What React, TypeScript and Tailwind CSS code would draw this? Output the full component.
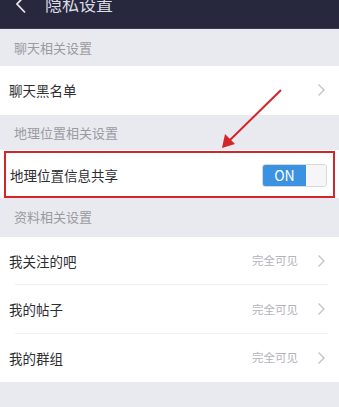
import React from "react";

const font = { fontFamily: '"Noto Sans CJK SC", "Noto Sans", sans-serif' };

function Chevron() {
  return (
    <svg width="9" height="14" viewBox="0 0 9 14" className="shrink-0">
      <path d="M1.5 1.5 L7 7 L1.5 12.5" fill="none" stroke="#c4c4c8" strokeWidth="1.4" />
    </svg>
  );
}

function Section({ title, h, pt }: { title: string; h: string; pt?: string }) {
  return (
    <div className={`${h} flex items-center pl-[14px] text-[13px] text-[#9a9aa0] bg-[#e9eaf0]`}>
      <span className={pt}>{title}</span>
    </div>
  );
}

function Row({ label, value, border }: { label: string; value?: string; border?: boolean }) {
  return (
    <div className="h-[48.5px] bg-white flex items-center pl-[9px] relative">
      <span className="text-[13.5px] text-[#2e2e32] flex-1">{label}</span>
      {value && <span className="text-[11.5px] text-[#b4b4b8] mr-[19px]">{value}</span>}
      <span className="mr-[13px] flex items-center"><Chevron /></span>
      {border && <div className="absolute left-[15px] right-[11px] bottom-0 h-px bg-[#efeff2]" />}
    </div>
  );
}

export default function App() {
  return (
    <div className="w-[339px] h-[407px] bg-[#e9eaf0] relative overflow-hidden" style={font}>
      {/* header */}
      <div className="h-[29px] bg-[#27273e] flex items-end relative border-b border-[#3a3a50]">
        <svg width="12" height="20" viewBox="0 0 12 20" className="absolute left-[15px] top-[-6px]">
          <path d="M10 1.5 L2 10 L10 18.5" fill="none" stroke="#e6e6ec" strokeWidth="1.8" />
        </svg>
        <span className="absolute left-[45px] top-[-8px] text-[17px] text-[#dcdce4] leading-[24px]">隐私设置</span>
      </div>

      <Section title="聊天相关设置" h="h-[37px]" />
      <Row label="聊天黑名单" />
      <Section title="地理位置相关设置" h="h-[35px]" pt="mt-[2px]" />

      {/* location row */}
      <div className="h-[48px] bg-white flex items-center pl-[10px] relative">
        <span className="text-[13.5px] text-[#2e2e32] flex-1 mt-[3px]">地理位置信息共享</span>
        <div className="mr-[12px] mt-[3px] flex h-[23px] w-[65px] rounded-[3px] overflow-hidden border border-[#d8d8dc]">
          <div className="w-[43px] bg-[#3a92e0] flex items-center justify-center text-white text-[14px]">ON</div>
          <div className="flex-1 bg-[#f6f6f8]" />
        </div>
        <div className="absolute left-[4px] right-[4px] top-[1px] bottom-[0px] border-[2.5px] border-[#d3262b] pointer-events-none" />
      </div>

      <Section title="资料相关设置" h="h-[39px]" />
      <Row label="我关注的吧" value="完全可见" border />
      <Row label="我的帖子" value="完全可见" border />
      <Row label="我的群组" value="完全可见" />

      {/* annotation arrow */}
      <svg className="absolute left-0 top-0 pointer-events-none" width="339" height="407">
        <line x1="281" y1="90" x2="229" y2="141" stroke="#d3262b" strokeWidth="2" />
        <polygon points="222,148 225,134 235,144" fill="#d3262b" />
      </svg>
    </div>
  );
}
